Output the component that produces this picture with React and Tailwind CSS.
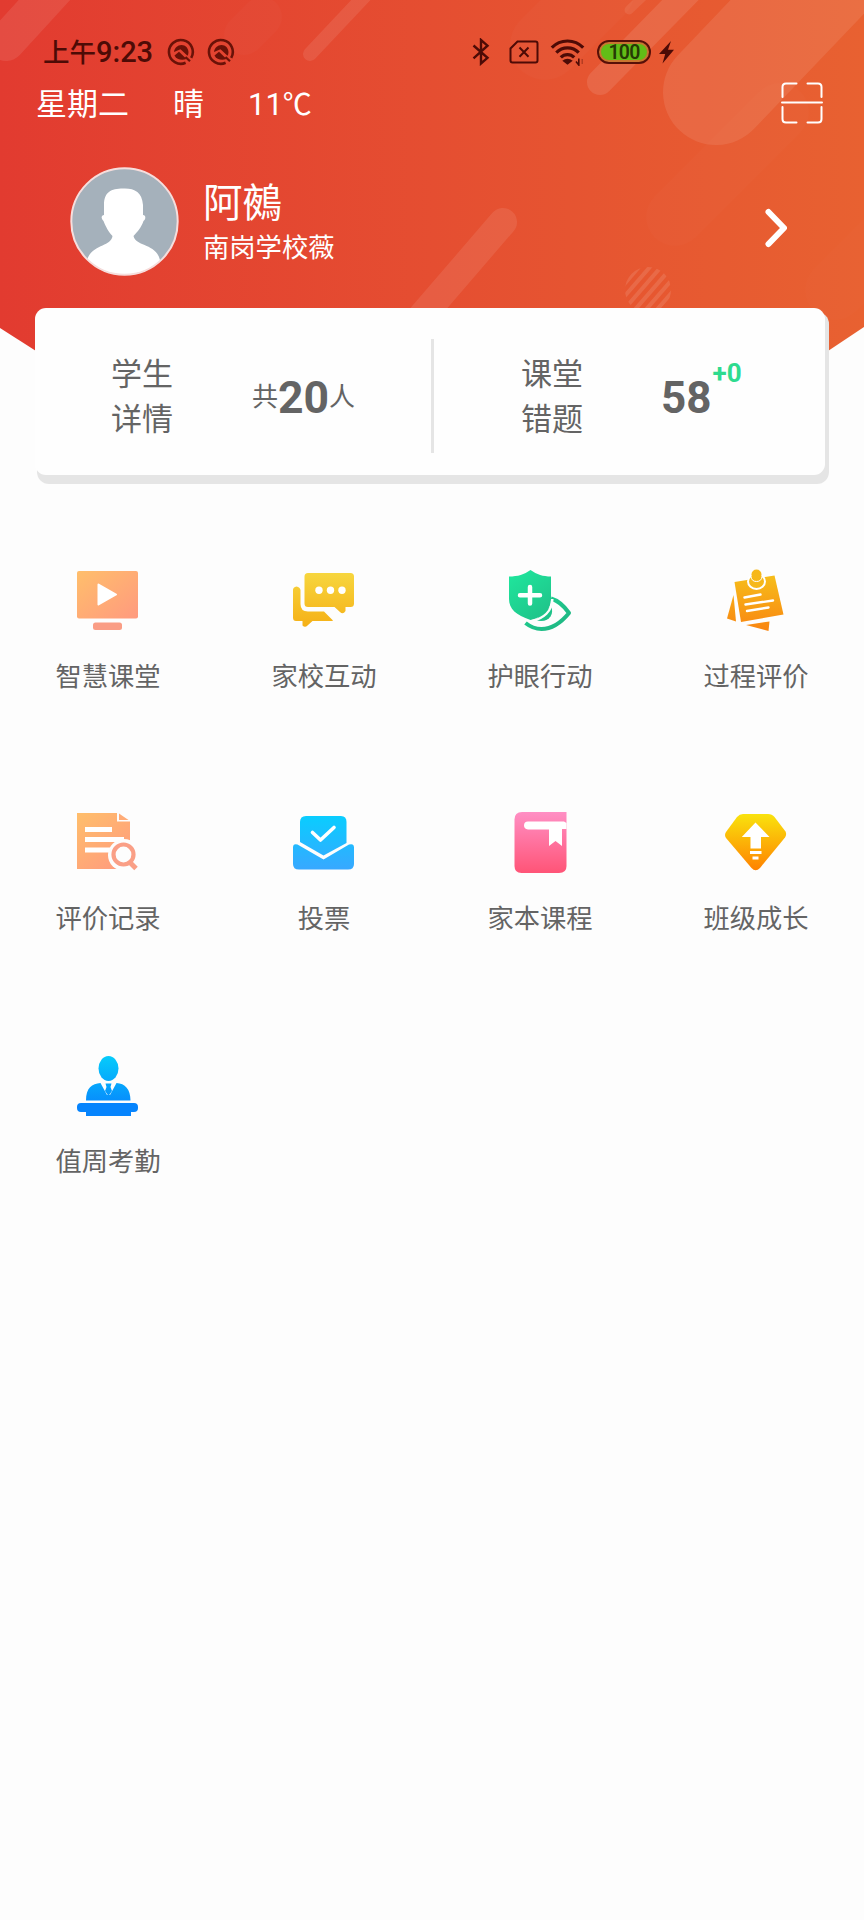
import React from 'react';
import { clsx } from 'clsx';
import { twMerge } from 'tailwind-merge';

function cn(...inputs) {
  return twMerge(clsx(inputs));
}

const stripes = [582, 593, 604, 615, 626, 637, 648, 659];

function HeaderBackdrop() {
  return (
    <svg className="absolute inset-0" width="864" height="352" viewBox="0 0 864 352">
      <defs>
        <linearGradient id="hdr" x1="0" y1="0" x2="1" y2="0">
          <stop offset="0" stopColor="#e23b30" />
          <stop offset="0.5" stopColor="#e54e31" />
          <stop offset="1" stopColor="#e86131" />
        </linearGradient>
        <clipPath id="hdrShape">
          <path d="M0 0H864V327L828 351H36L0 328Z" />
        </clipPath>
        <clipPath id="dot">
          <circle cx="648" cy="290" r="23" />
        </clipPath>
      </defs>
      <g clipPath="url(#hdrShape)">
        <rect width="864" height="352" fill="url(#hdr)" />
        <g stroke="#fff" strokeLinecap="round" fill="none">
          <path d="M6 42L70 -28" strokeWidth="38" opacity="0.09" />
          <path d="M310 54L375 -15" strokeWidth="14" opacity="0.09" />
          <path d="M244 35L262 17" strokeWidth="40" opacity="0.02" />
          <path d="M600 82L700 -20" strokeWidth="26" opacity="0.1" />
          <path d="M629 10L650 -10" strokeWidth="9" opacity="0.08" />
          <path d="M716 92L840 -38" strokeWidth="106" opacity="0.09" />
          <path d="M545 45L600 -10" strokeWidth="70" opacity="0.02" />
          <path d="M675 217L780 112" strokeWidth="58" opacity="0.015" />
          <path d="M503 222L410 330" strokeWidth="28" opacity="0.09" />
          <path d="M835 290L900 225" strokeWidth="60" opacity="0.012" />
        </g>
        <g clipPath="url(#dot)" stroke="#fff" strokeWidth="4" opacity="0.11">
          {stripes.map((x) => (
            <path key={x} d={`M${x} 320L${x + 52} 260`} />
          ))}
        </g>
      </g>
    </svg>
  );
}

function NoticeIcon() {
  return (
    <svg width="28" height="28" viewBox="0 0 28 28" fill="none">
      <path d="M18.600 24.800A11.900 11.900 0 1 1 24.200 19.800" stroke="#6a1208" strokeWidth="2.600" />
      <path d="M7 14C7.500 10 10.500 7 14.500 7c4 0 7 3.200 7 7.200 0 1.400-.4 2.600-1 3.600L13.500 11.300Z" fill="#6a1208" />
      <path d="M7.500 17.500L12 13.800l7.500 7.200C15.500 22.500 9.500 22 7.500 17.500Z" fill="#6a1208" />
      <path d="M18.500 19l4.500 4.300" stroke="#6a1208" strokeWidth="2.200" />
    </svg>
  );
}

function StatusBar() {
  return (
    <div className="flex h-7 items-center pl-[43px] text-[#4d0b06]">
      <span className="flex w-[111px] items-baseline whitespace-nowrap pt-px font-medium leading-7">
        <span className="text-[26.5px]">上午</span>
        <span className="text-[29px]">9:23</span>
      </span>
      <div className="ml-[13px] flex gap-3">
        <NoticeIcon />
        <NoticeIcon />
      </div>
      <svg className="ml-[237px]" width="18" height="28" viewBox="0 0 18 28" fill="none" stroke="currentColor" strokeWidth="2.400">
        <path d="M1.500 7.500L15.500 19.800L9 25.500V2L15.500 7.700L1.500 20.300" />
      </svg>
      <svg className="ml-[19px]" width="30" height="24" viewBox="0 0 30 24" fill="none" stroke="currentColor" strokeWidth="2">
        <path d="M8.500 1.500H26.500Q28.500 1.500 28.500 3.500V20.500Q28.500 22.500 26.500 22.500H3.500Q1.500 22.500 1.500 20.500V8.500Z" />
        <path d="M10.500 7.500L19.500 16.800M19.500 7.500L10.500 16.800" />
      </svg>
      <svg className="ml-[11px]" width="36" height="28" viewBox="0 0 36 28" fill="none" stroke="currentColor" strokeWidth="3.200">
        <path d="M1.800 9.600A22 22 0 0 1 33.200 9.600M6.300 14.600A15.500 15.500 0 0 1 28.700 14.600M10.800 19.400A9.300 9.300 0 0 1 24.200 19.400" />
        <path d="M12.300 22.800Q17.500 18.800 22.700 22.800L17.500 26.800Z" fill="currentColor" stroke="none" />
        <path d="M28.800 20.500V27L26 23.500" strokeWidth="1.600" />
        <path d="M32.200 21v5" strokeWidth="1.200" opacity="0.4" />
      </svg>
      <div className="ml-[11px] flex h-6 w-[54px] items-center justify-center rounded-full border-2 border-[#571008] bg-[#c97530] p-[2px]">
        <div className="flex h-full w-full items-center justify-center rounded-full bg-[#62bd17] pt-px text-[19.5px] font-semibold leading-none tracking-[-0.8px] text-[#263a05]">100</div>
      </div>
      <svg className="ml-[8px]" width="16" height="24" viewBox="0 0 16 24" fill="currentColor">
        <path d="M12 1L0 14H6.200L3.500 23.500L15 9.800H9Z" />
      </svg>
    </div>
  );
}

function ScanIcon() {
  return (
    <svg width="42" height="42" viewBox="0 0 42 42" fill="none" stroke="#fff" strokeWidth="2" strokeLinecap="round">
      <path d="M1.500 15V5Q1.500 1.500 5 1.500H15.500M26.500 1.500H37Q40.500 1.500 40.500 5V15M1.500 25V37Q1.500 40.500 5 40.500H15.500M26.500 40.500H37Q40.500 40.500 40.500 37V25" />
      <path d="M1 20.500H41" />
    </svg>
  );
}

function Avatar() {
  return (
    <svg width="109" height="109" viewBox="0 0 109 109">
      <defs>
        <clipPath id="avatar">
          <circle cx="54.500" cy="54.500" r="53" />
        </clipPath>
      </defs>
      <circle cx="54.500" cy="54.500" r="53" fill="#a5b1bb" />
      <path
        clipPath="url(#avatar)"
        d="M53 21.500C64 21 72 24.500 73 38V48C76 48 76 52 73.500 54C71 61 68 64 63.500 69C66 80 86 76 90 93V110H17V93C22 77 41 80 42.500 69C38 64 36 60 33.500 54C30.500 51 31.500 48 34 48V38C34 25 41 21.500 53 21.500Z"
        fill="#fff"
      />
      <circle cx="54.500" cy="54.500" r="53.200" fill="none" stroke="#f6dedd" strokeWidth="2" />
    </svg>
  );
}

function Gradient({ id, from, to, diagonal }) {
  return (
    <linearGradient id={id} gradientUnits="userSpaceOnUse" x1={diagonal ? 8 : 32} y1="2" x2={diagonal ? 56 : 32} y2="62">
      <stop offset="0" stopColor={from} />
      <stop offset="1" stopColor={to} />
    </linearGradient>
  );
}

function IconBox({ children }) {
  return (
    <svg width="64" height="64" viewBox="0 0 64 64" fill="none">
      {children}
    </svg>
  );
}

function ClassroomIcon() {
  return (
    <IconBox>
      <Gradient id="g1" from="#ffbd6c" to="#ff9780" diagonal />
      <rect x="1" y="3" width="61" height="47.500" rx="2" fill="url(#g1)" />
      <path d="M22.500 16.500L40 26.500L22.500 36.500Z" fill="#fff" stroke="#fff" strokeWidth="2" strokeLinejoin="round" />
      <rect x="17" y="54.500" width="29" height="7.500" rx="2.500" fill="#fa9d85" />
    </IconBox>
  );
}

function ChatIcon() {
  return (
    <IconBox>
      <Gradient id="g2" from="#f7d840" to="#f5ae14" />
      <path d="M16 5H58.500Q62 5 62 8.500V35.500Q62 39 58.500 39H53.500V43Q51 47 48 44L42.500 39H16Q12.500 39 12.500 35.500V8.500Q12.500 5 16 5Z" fill="url(#g2)" />
      <path d="M1 22Q1 19 4.500 18.500Q8 19 8.500 22V36Q8.500 43.500 16 43.500H32L41 52.500Q40.500 53 39 53H20.500L15.500 57.500Q13 60 10.500 57.500V53H4Q1 53 1 49.500Z" fill="url(#g2)" />
      <circle cx="27" cy="22.300" r="3.700" fill="#fff" />
      <circle cx="38.500" cy="22.300" r="3.700" fill="#fff" />
      <circle cx="50" cy="22.300" r="3.700" fill="#fff" />
    </IconBox>
  );
}

function EyeCareIcon() {
  return (
    <IconBox>
      <Gradient id="g3" from="#1fe59c" to="#1fb582" diagonal />
      <path d="M17.500 55Q25 61 33.500 61Q48 61 61 45Q53 33.500 43 30.500" stroke="url(#g3)" strokeWidth="4" strokeLinejoin="round" />
      <path d="M43 38C47 47 40 56 27 52Z" fill="url(#g3)" />
      <path d="M22.500 2C29 6.500 35 8.500 43 8.500V31C43 42 35 49 22.500 52C8 47 1 41 1 31V8.500C10 8.500 16 6.500 22.500 2Z" fill="url(#g3)" />
      <path d="M44.300 31C44.300 43 35.500 50.500 23 53.500" stroke="#fdfdfd" strokeWidth="2.500" />
      <path d="M22 19V35.500M12 27.200H32" stroke="#fff" strokeWidth="4.500" strokeLinecap="round" />
    </IconBox>
  );
}

function NoteIcon() {
  return (
    <IconBox>
      <Gradient id="g4" from="#f6c31b" to="#f98611" />
      <path d="M9.500 27L3 50.500L12 53.500Z" fill="url(#g4)" />
      <path d="M22 57L45.500 53.500L44.500 63Z" fill="url(#g4)" />
      <path d="M10.500 14L50.500 7.500L59.500 46.500L17 54Z" fill="url(#g4)" />
      <ellipse cx="32.500" cy="13.500" rx="8.500" ry="7.500" fill="#f6b81a" stroke="#fff" strokeWidth="2" />
      <path d="M27 8.500Q27.500 13.500 32.500 13.500Q37.500 13.500 38 8.500" fill="#f6b81a" stroke="#fff" strokeWidth="1" />
      <circle cx="32.500" cy="6.500" r="5" fill="#f6b81a" />
      <path d="M20.500 29.500L36.500 26.500M21.500 36.500L49 32.500M23 43L44.500 39.500" stroke="#fff" strokeWidth="2.400" strokeLinecap="round" />
    </IconBox>
  );
}

function RecordIcon() {
  return (
    <IconBox>
      <Gradient id="g5" from="#ffbd6c" to="#ff9780" diagonal />
      <path d="M1 3H41V11.500H54V59H1Z" fill="url(#g5)" />
      <path d="M43 3.500L52.500 10H43Z" fill="#ffac78" />
      <path d="M9 19.500H36M9 29.500H48M9 40H36" stroke="#fff" strokeWidth="5" />
      <circle cx="48" cy="45" r="16" fill="#fdfdfd" />
      <rect x="50" y="50" width="14" height="14" fill="#fdfdfd" />
      <circle cx="47.500" cy="44.500" r="10" stroke="#fa9f86" strokeWidth="4.200" />
      <path d="M54 52.500L60 58.500" stroke="#fa9f86" strokeWidth="5" />
    </IconBox>
  );
}

function VoteIcon() {
  return (
    <IconBox>
      <Gradient id="g6" from="#06d0ff" to="#3aa6ff" />
      <path d="M14 6H49Q54.500 6 54.500 12V33L31.500 45.500L8 32V12Q8 6 14 6Z" fill="url(#g6)" />
      <path d="M1 37.500Q1 33 5.500 34.500L31.500 49.500L57 34.500Q62 33 62 37.500V54Q62 59.500 56 59.500H7Q1 59.500 1 54Z" fill="url(#g6)" />
      <path d="M20.500 22.500L28.500 30L42 17.500" stroke="#fff" strokeWidth="3.600" strokeLinecap="round" strokeLinejoin="round" />
    </IconBox>
  );
}

function BookIcon() {
  return (
    <IconBox>
      <Gradient id="g7" from="#ff8fc4" to="#ff5578" />
      <path d="M14 2H58.500V56Q58.500 63 51 63H13.500Q6.500 63 6.500 56V9.500Q6.500 2 14 2Z" fill="url(#g7)" />
      <path d="M20 11.500H56L58.500 13V19H54V36L47.500 31L41 36V19.500H20Q16 19 16 15.500Q16 11.500 20 11.500Z" fill="#fff" />
    </IconBox>
  );
}

function GrowthIcon() {
  return (
    <IconBox>
      <Gradient id="g8" from="#f9e60e" to="#ff7f00" />
      <path d="M19 4H44Q48 4 50.500 7L61.500 21.500Q63 24.500 61 27.500L36 58Q31.500 62.500 27.500 58L2 28Q0 25 2 22L13 7Q15.500 4 19 4Z" fill="url(#g8)" />
      <path d="M31.500 12.500L45.500 27H37V38.500H26.500V27H17.800Z" fill="#fff" />
      <path d="M26 42.500H37.500M28.500 48H34.500" stroke="#fff" strokeWidth="2.800" />
    </IconBox>
  );
}

function DutyIcon() {
  return (
    <IconBox>
      <Gradient id="g9" from="#06cdfb" to="#077cfd" />
      <ellipse cx="32.500" cy="15.500" rx="10" ry="12.500" fill="url(#g9)" />
      <path d="M10 47.500C10 35 16 30.500 24.500 30L31 42H34L40.500 30C49 30.500 54.500 36 54.500 47.500Z" fill="url(#g9)" />
      <path d="M29.500 30.500H35.500L34.500 34L36 38L32.500 43L29 38L30.500 34Z" fill="url(#g9)" />
      <path d="M5 50H58Q62 50 62 54V55Q62 59 58 59H55V63H10V59H5Q1 59 1 55V54Q1 50 5 50Z" fill="#0684fd" />
    </IconBox>
  );
}

const menus = [
  { label: '智慧课堂', icon: ClassroomIcon },
  { label: '家校互动', icon: ChatIcon },
  { label: '护眼行动', icon: EyeCareIcon },
  { label: '过程评价', icon: NoteIcon },
  { label: '评价记录', icon: RecordIcon },
  { label: '投票', icon: VoteIcon },
  { label: '家本课程', icon: BookIcon },
  { label: '班级成长', icon: GrowthIcon },
  { label: '值周考勤', icon: DutyIcon },
];

function StatCard({ lines, className, children }) {
  return (
    <div className={cn('flex items-center pt-[11px]', className)}>
      <div className="w-[62px] text-[31px] leading-[45px]">
        {lines.map((line) => (
          <div key={line}>{line}</div>
        ))}
      </div>
      {children}
    </div>
  );
}

export default function App() {
  return (
    <div className="min-h-[1920px] w-[864px] overflow-hidden bg-[#fdfdfd] font-['Roboto','Noto_Sans_CJK_SC',sans-serif] text-[#646464]">
      <header className="relative h-[308px]">
        <HeaderBackdrop />
        <div className="relative pt-[38px]">
          <StatusBar />
          <div className="flex h-[61px] items-start justify-between pl-[36px] pr-[41px] pt-4 text-white">
            <div className="flex items-baseline text-[31px] leading-10">
              <span className="w-[137px]">星期二</span>
              <span className="w-[75px]">晴</span>
              <span>11</span>
              <span className="font-['Noto_Sans_CJK_SC',sans-serif] text-[29px]">℃</span>
            </div>
            <ScanIcon />
          </div>
          <div className="mt-[40px] flex items-center pl-[70px] pr-[77px] text-white">
            <Avatar />
            <div className="ml-6 flex-1 pt-[3px]">
              <div className="text-[39.5px] leading-[50px]">阿鵺</div>
              <div className="text-[26.3px] leading-[38px]">南岗学校薇</div>
            </div>
            <svg className="mt-[13px]" width="22" height="40" viewBox="0 0 22 40" fill="none" stroke="#fff" strokeWidth="6" strokeLinecap="round" strokeLinejoin="round">
              <path d="M3.500 4L19 20L3.500 36" />
            </svg>
          </div>
        </div>
      </header>

      <section className="relative ml-[35px] flex h-[176px] w-[794px] pb-[9px] pr-1">
        <div className="absolute bottom-0 left-[2px] right-0 top-1 rounded-xl bg-[#e5e5e5]" />
        <div className="relative flex h-full w-full items-center rounded-[11px] bg-[#fefefe]">
          <StatCard lines={['学生', '详情']} className="w-[396px] pl-[76px]">
            <div className="ml-[79px] flex items-center text-[26px]">
              <span>共</span>
              <b className="pt-[2px] text-[44.5px] font-bold leading-none">20</b>
              <span>人</span>
            </div>
          </StatCard>
          <div className="mt-2 h-[114px] w-[3px] bg-[#e5e5e5]" />
          <StatCard lines={['课堂', '错题']} className="pl-[87px]">
            <div className="ml-[78px] flex items-center">
              <b className="pt-px text-[44px] font-bold leading-none">58</b>
              <b className="mb-[49px] ml-px text-[26px] font-bold leading-none text-[#2edb8f]">+0</b>
            </div>
          </StatCard>
        </div>
      </section>

      <nav className="grid grid-cols-4 pt-[84px]">
        {menus.map(({ label, icon: Icon }) => (
          <div key={label} className="flex h-[242.4px] flex-col items-center">
            <Icon />
            <span className="mt-[26px] text-[26.3px] leading-[38px]">{label}</span>
          </div>
        ))}
      </nav>
    </div>
  );
}
